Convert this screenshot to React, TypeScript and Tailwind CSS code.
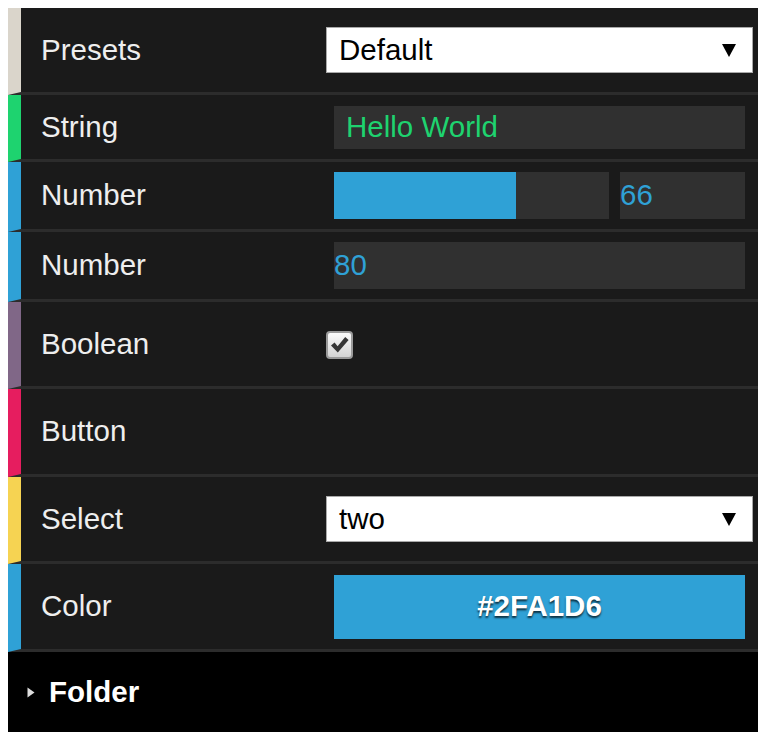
import React from 'react';

const font = "font-['Liberation_Sans',Arial,sans-serif]";

interface RowProps {
  label: string;
  stripe: string;
  height: string;
  children?: React.ReactNode;
}

const Row: React.FC<RowProps> = ({ label, stripe, height, children }) => (
  <div className={`flex items-center border-l-[13px] border-b-[3px] border-b-[#2c2c2c] ${stripe} ${height}`}>
    <div className="w-[305px] shrink-0 pl-[20px] text-[29.5px] text-[#eeeeee]">{label}</div>
    <div className="flex flex-1 items-center">{children}</div>
  </div>
);

const Dropdown: React.FC<{ value: string }> = ({ value }) => (
  <div className="flex h-[46px] w-[427px] items-center justify-between border border-[#a9a9a9] bg-white pl-[12px] pr-[16px] text-[29.5px] text-black">
    <span>{value}</span>
    <svg width="14" height="13" viewBox="0 0 14 13">
      <path d="M0 0 H14 L7 13 Z" fill="#000" />
    </svg>
  </div>
);

const App: React.FC = () => {
  return (
    <div className={`min-h-[740px] bg-white p-2 ${font}`}>
      <div className="w-[750px] bg-[#1a1a1a]">
        <Row label="Presets" stripe="border-l-[#dad5cb]" height="h-[87px]">
          <Dropdown value="Default" />
        </Row>

        <Row label="String" stripe="border-l-[#1ed36f]" height="h-[67px]">
          <div className="ml-[8px] flex h-[43px] w-[411px] items-center bg-[#303030] pl-[12px] text-[29.5px] text-[#1ed36f]">
            Hello World
          </div>
        </Row>

        <Row label="Number" stripe="border-l-[#2fa1d6]" height="h-[70px]">
          <div className="ml-[8px] flex h-[47px] w-[275px] bg-[#303030]">
            <div className="h-full bg-[#2fa1d6]" style={{ width: '66%' }} />
          </div>
          <div className="ml-[11px] flex h-[47px] w-[125px] items-center bg-[#303030] text-[29.5px] text-[#2fa1d6]">
            66
          </div>
        </Row>

        <Row label="Number" stripe="border-l-[#2fa1d6]" height="h-[70px]">
          <div className="ml-[8px] flex h-[47px] w-[411px] items-center bg-[#303030] text-[29.5px] text-[#2fa1d6]">
            80
          </div>
        </Row>

        <Row label="Boolean" stripe="border-l-[#806787]" height="h-[87px]">
          <div className="mt-[2px] flex h-[28px] w-[27px] items-center justify-center rounded-[4px] border-2 border-[#9a9a9a] bg-gradient-to-b from-[#fbfbfb] to-[#d4d4d4]">
            <svg width="20" height="18" viewBox="0 0 20 18">
              <path d="M1 9.5 L4.6 6.4 L7.6 10.2 L15.2 1 L18.6 4 L7.8 16.6 Z" fill="#363636" />
            </svg>
          </div>
        </Row>

        <Row label="Button" stripe="border-l-[#e61d5f]" height="h-[88px]" />

        <Row label="Select" stripe="border-l-[#f6d352]" height="h-[87px]">
          <Dropdown value="two" />
        </Row>

        <Row label="Color" stripe="border-l-[#2fa1d6]" height="h-[88px]">
          <div className="ml-[8px] flex h-[64px] w-[411px] items-center justify-center bg-[#2fa1d6] text-[29.5px] font-bold text-white [text-shadow:0_2px_2px_rgba(0,0,0,0.7)]">
            #2FA1D6
          </div>
        </Row>

        <div className="flex h-[80px] items-center bg-black pl-[19px]">
          <svg width="8" height="11" viewBox="0 0 8 11" className="mr-[14px]">
            <path d="M0.5 0.5 L7.5 5.5 L0.5 10.5 Z" fill="#dddddd" />
          </svg>
          <span className="text-[29.5px] font-bold text-white">Folder</span>
        </div>
      </div>
    </div>
  );
};

export default App;
